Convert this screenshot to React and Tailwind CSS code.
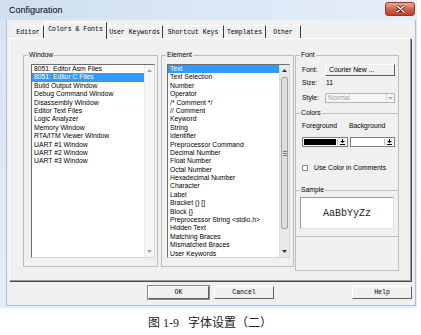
import React from "react";

const windowItems = [
    "8051: Editor Asm Files",
    "8051: Editor C Files",
    "Build Output Window",
    "Debug Command Window",
    "Disassembly Window",
    "Editor Text Files",
    "Logic Analyzer",
    "Memory Window",
    "RTA/ITM Viewer Window",
    "UART #1 Window",
    "UART #2 Window",
    "UART #3 Window"
];

const elementItems = [
    "Text",
    "Text Selection",
    "Number",
    "Operator",
    "/* Comment */",
    "// Comment",
    "Keyword",
    "String",
    "Identifier",
    "Preprocessor Command",
    "Decimal Number",
    "Float Number",
    "Octal Number",
    "Hexadecimal Number",
    "Character",
    "Label",
    "Bracket () []",
    "Block {}",
    "Preprocessor String <stdio.h>",
    "Hidden Text",
    "Matching Braces",
    "Mismatched Braces",
    "User Keywords"
];

const tabs = [
    { label: "Editor", w: "w-[31px]" },
    { label: "Colors & Fonts", w: "w-[63px]", active: true },
    { label: "User Keywords", w: "w-[56px]" },
    { label: "Shortcut Keys", w: "w-[61px]" },
    { label: "Templates", w: "w-[42px]" },
    { label: "Other", w: "w-[35px]" }
];

const Up = ({ color }) => (
    <svg width="5" height="3" viewBox="0 0 5 3">
        <path d="M0 3 L2.5 0 L5 3 Z" fill={color} />
    </svg>
);

const Down = ({ color }) => (
    <svg width="5" height="3" viewBox="0 0 5 3">
        <path d="M0 0 L5 0 L2.5 3 Z" fill={color} />
    </svg>
);

// little arrow-to-bar glyph on the colour pickers
const ArrowBar = () => (
    <svg width="5" height="6" viewBox="0 0 5 6">
        <path d="M2 0 H3 V2 H2 Z M0 2 H5 L2.5 4 Z M0 5 H5 V6 H0 Z" fill="#000" />
    </svg>
);

const ListBox = ({ items, selected, width, active }) => (
    <div
        className={`flex h-[194px] ${width} border border-t-[#6e6e6e] border-l-[#6e6e6e] border-r-[#d6d6d6] border-b-[#d6d6d6] bg-white`}
    >
        <div className="flex-1 overflow-hidden">
            {items.map((t, i) => (
                <div
                    key={t}
                    className={`h-[8.4px] leading-[8.4px] pl-[2px] whitespace-nowrap ${
                        i === selected ? "bg-[#3399ff] text-white" : "text-black"
                    }`}
                >
                    {t}
                </div>
            ))}
        </div>
        {active ? (
            <div className="w-[10px] flex flex-col bg-[#e9e9e9] border-l border-[#dcdcdc]">
                <div className="h-[11px] flex items-center justify-center">
                    <Up color="#333" />
                </div>
                <div className="mt-[1px] h-[152px] mx-[1px] bg-[#dedede] border border-[#a2a2a2] rounded-[2px] flex flex-col items-center justify-center gap-[1px]">
                    <div className="w-[4px] h-px bg-[#777]" />
                    <div className="w-[4px] h-px bg-[#777]" />
                    <div className="w-[4px] h-px bg-[#777]" />
                </div>
                <div className="flex-1" />
                <div className="h-[11px] flex items-center justify-center">
                    <Down color="#333" />
                </div>
            </div>
        ) : (
            <div className="w-[10px] flex flex-col justify-between items-center py-[4px] bg-[#f6f6f6] border-l border-[#ececec]">
                <Up color="#a6a6a6" />
                <Down color="#a6a6a6" />
            </div>
        )}
    </div>
);

const Legend = ({ children }) => (
    <legend className="ml-[4px] px-[1px] leading-[8px] text-black">{children}</legend>
);

const Btn = ({ children, w, def }) => (
    <button
        className={`${w} h-[13px] flex items-center justify-center bg-[#f0f0f0] border border-t-white border-l-white border-r-[#5e5e5e] border-b-[#5e5e5e] ${
            def ? "outline outline-[#8a8a8a]" : ""
        } font-['Liberation_Mono',monospace] text-[6.5px] text-black`}
    >
        {children}
    </button>
);

export default function App() {
    return (
        <div className="w-[421px] h-[335px] bg-white overflow-hidden font-['Liberation_Sans',Arial,sans-serif] text-[6.8px]">
            {/* Dialog window */}
            <div className="w-[417px] h-[308px] flex flex-col bg-gradient-to-b from-[#d6e4f3] to-[#e4edf8]">
                {/* Title bar */}
                <div className="h-[20px] flex items-start justify-between bg-gradient-to-r from-[#cfdff0] via-[#dae7f5] to-[#e5eef9]">
                    <span className="pl-[9px] pt-[4px] text-[9px] leading-[12px] text-black">
                        Configuration
                    </span>
                    <div className="mt-[2px] mr-[2px] w-[30px] h-[14px] rounded-[3px] border border-[#8d3b2b] bg-gradient-to-b from-[#e9a897] via-[#d4644c] to-[#c0402a] flex items-center justify-center">
                        <svg width="9" height="8" viewBox="0 0 9 8">
                            <path
                                d="M1 1 L8 7 M8 1 L1 7"
                                stroke="#5a1d12"
                                strokeWidth="3"
                                strokeLinecap="round"
                            />
                            <path
                                d="M1 1 L8 7 M8 1 L1 7"
                                stroke="#fff"
                                strokeWidth="1.6"
                                strokeLinecap="round"
                            />
                        </svg>
                    </div>
                </div>

                {/* Client area */}
                <div className="flex-1 ml-[6px] mr-[1px] mb-[2px] flex flex-col bg-[#f0f0f0] border-l border-b border-r border-[#a7c0de]">
                    {/* Tabs */}
                    <div className="h-[18px] pl-[6px] flex items-end font-['Liberation_Mono',monospace] text-[6.5px] text-black">
                        {tabs.map(t =>
                            t.active ? (
                                <div
                                    key={t.label}
                                    className={`${t.w} h-[17px] -mb-px relative z-10 flex items-center justify-center bg-[#f0f0f0] border-t border-l border-white border-r border-r-[#3c3c3c] pb-[2px]`}
                                >
                                    {t.label}
                                </div>
                            ) : (
                                <div
                                    key={t.label}
                                    className={`${t.w} h-[13px] flex items-center justify-center border-t border-t-white border-r border-r-[#3c3c3c] pt-px`}
                                >
                                    {t.label}
                                </div>
                            )
                        )}
                    </div>

                    {/* Tab page */}
                    <div className="h-[243px] ml-[2px] mr-[4px] border border-t-white border-l-white border-r-[#9a9a9a] border-b-[#9a9a9a] shadow-[1px_1px_0_#4a4a4a] flex pt-[12px] pl-[13px]">
                        {/* Window group */}
                        <fieldset className="w-[135px] h-[216px] border border-[#bdbdbd]">
                            <Legend>Window</Legend>
                            <div className="mt-[5px] ml-[7px]">
                                <ListBox items={windowItems} selected={1} width="w-[124px]" />
                            </div>
                        </fieldset>

                        {/* Element group */}
                        <fieldset className="ml-[3px] w-[133px] h-[216px] border border-[#bdbdbd]">
                            <Legend>Element</Legend>
                            <div className="mt-[5px] ml-[5px]">
                                <ListBox items={elementItems} selected={0} width="w-[123px]" active />
                            </div>
                        </fieldset>

                        {/* Right column */}
                        <div className="ml-[1px] w-[104px] flex flex-col">
                            <fieldset className="h-[62px] border-x border-t border-[#bdbdbd]">
                                <Legend>Font</Legend>
                                <div className="mt-[5px] ml-[6px] flex items-center h-[12px]">
                                    <span className="w-[23px]">Font:</span>
                                    <div className="w-[70px] h-[12px] flex items-center pl-[3px] bg-[#f0f0f0] border border-t-white border-l-white border-r-[#5e5e5e] border-b-[#5e5e5e]">
                                        Courier New ...
                                    </div>
                                </div>
                                <div className="mt-[3px] ml-[6px] flex items-center h-[8px]">
                                    <span className="w-[24px]">Size:</span>
                                    <span>11</span>
                                </div>
                                <div className="mt-[6px] ml-[6px] flex items-center h-[10px]">
                                    <span className="w-[23px]">Style:</span>
                                    <div className="w-[70px] h-[10px] flex items-center bg-[#f7f7f7] border border-[#b4b4b4] text-[#a3a3a3]">
                                        <span className="flex-1 pl-[2px]">Normal</span>
                                        <div className="w-[8px] h-full flex items-center justify-center border-l border-[#d8d8d8]">
                                            <Down color="#b0b0b0" />
                                        </div>
                                    </div>
                                </div>
                            </fieldset>

                            <fieldset className="-mt-[4px] h-[81px] border-x border-t border-[#bdbdbd]">
                                <Legend>Colors</Legend>
                                <div className="mt-[5px] ml-[6px] flex h-[8px] items-center">
                                    <span className="w-[47px]">Foreground</span>
                                    <span>Background</span>
                                </div>
                                <div className="mt-[7px] ml-[6px] flex gap-[2px]">
                                    <div className="w-[46px] h-[10px] flex p-[1px] bg-white border border-[#7c7c7c]">
                                        <div className="flex-1 bg-black" />
                                        <div className="w-[9px] ml-[1px] flex items-center justify-center bg-[#f0f0f0] border-l border-[#bdbdbd]">
                                            <ArrowBar />
                                        </div>
                                    </div>
                                    <div className="w-[45px] h-[10px] flex p-[1px] bg-white border border-[#7c7c7c]">
                                        <div className="flex-1 bg-white" />
                                        <div className="w-[9px] ml-[1px] flex items-center justify-center bg-[#f0f0f0] border-l border-[#bdbdbd]">
                                            <ArrowBar />
                                        </div>
                                    </div>
                                </div>
                                <div className="mt-[17px] ml-[6px] flex items-center h-[8px]">
                                    <div className="w-[6px] h-[6px] bg-white border border-[#8a8a8a]" />
                                    <span className="ml-[6px]">Use Color in Comments</span>
                                </div>
                            </fieldset>

                            <fieldset className="-mt-[4px] h-[50px] border-x border-t border-[#bdbdbd]">
                                <Legend>Sample</Legend>
                                <div className="mt-[3px] ml-[4px] w-[94px] h-[32px] flex items-center justify-center bg-white border border-t-[#9a9a9a] border-l-[#9a9a9a] border-r-[#e2e2e2] border-b-[#e2e2e2] font-['Liberation_Mono',monospace] text-[10px] text-[#222]">
                                    AaBbYyZz
                                </div>
                            </fieldset>

                            <div className="h-[35px] border border-[#bdbdbd]" />
                        </div>
                    </div>

                    {/* Buttons */}
                    <div className="mt-[5px] flex pl-[141px] pr-[3px]">
                        <Btn w="w-[61px]" def>
                            OK
                        </Btn>
                        <div className="ml-[5px]">
                            <Btn w="w-[60px]">Cancel</Btn>
                        </div>
                        <div className="ml-auto">
                            <Btn w="w-[60px]">Help</Btn>
                        </div>
                    </div>
                </div>
            </div>

            {/* Caption */}
            <div className="mt-[8px] pl-[148px] text-[12px] leading-[14px] text-[#222] font-['Liberation_Serif','Noto_Sans_CJK_SC',serif]">
                图 1-9&nbsp;&nbsp;&nbsp;字体设置（二）
            </div>
        </div>
    );
}
